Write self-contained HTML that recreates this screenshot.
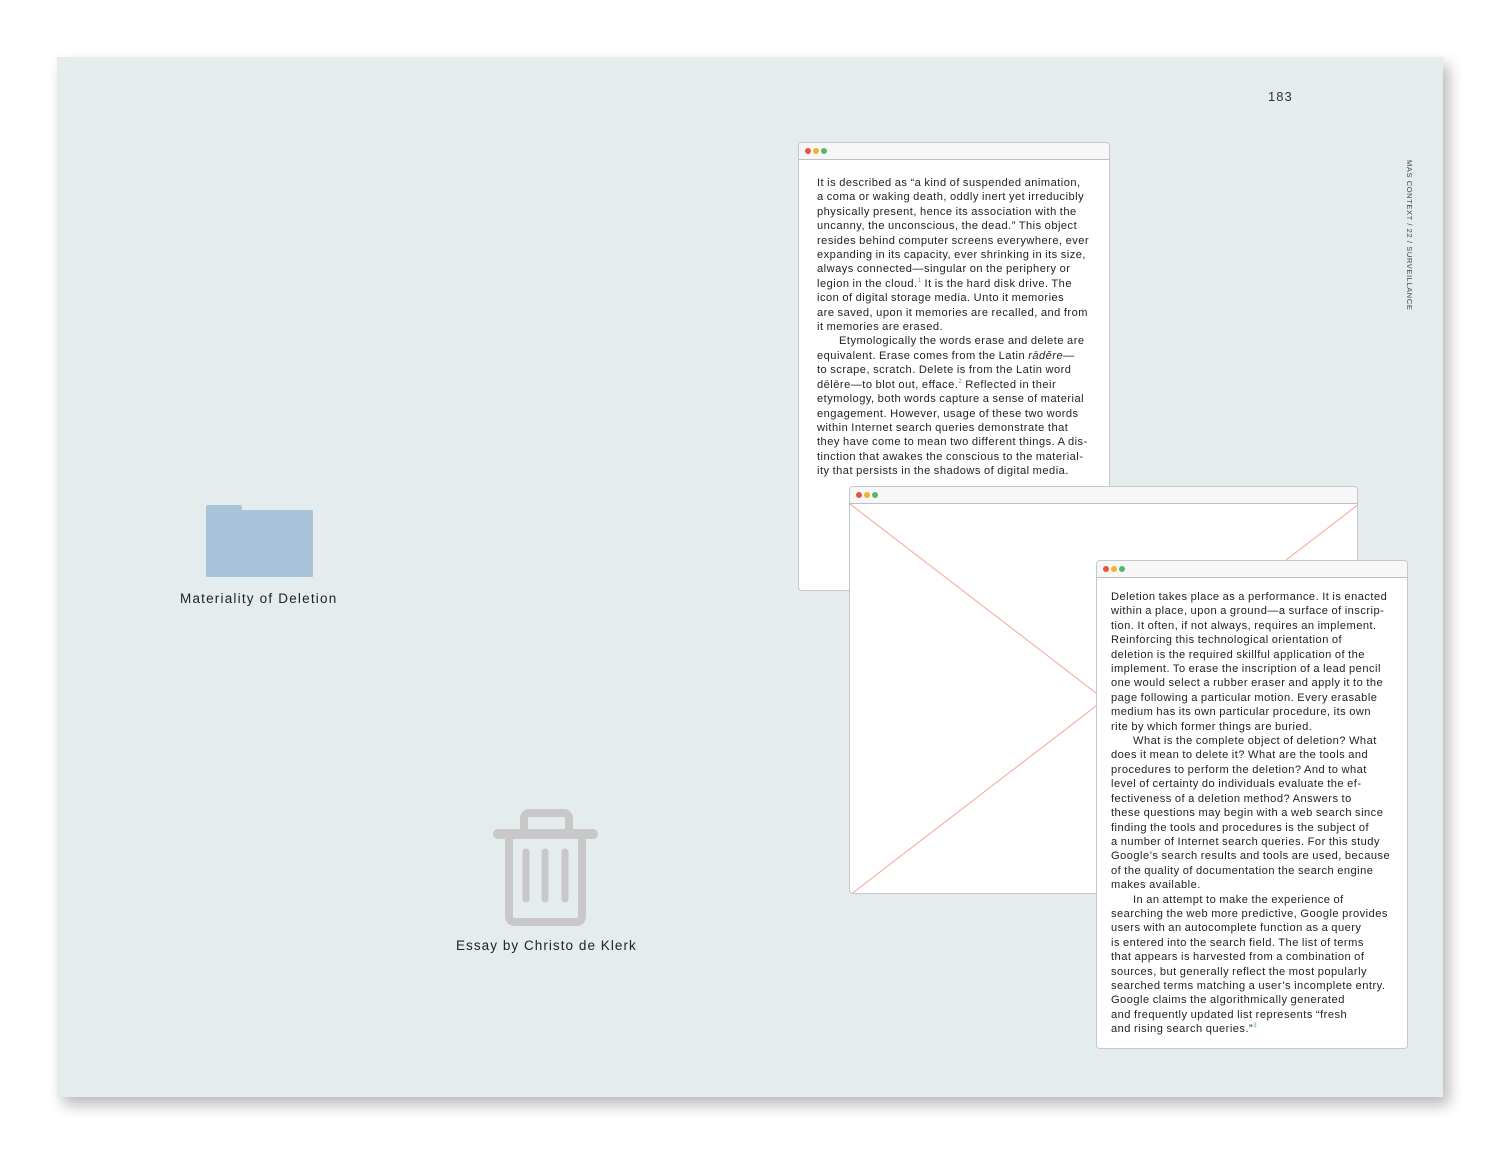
<!DOCTYPE html>
<html><head><meta charset="utf-8">
<style>
*{margin:0;padding:0;box-sizing:border-box}
body{width:1500px;height:1154px;background:#fff;position:relative;overflow:hidden;font-family:"Liberation Sans",sans-serif;color:#222}
.page{position:absolute;left:57px;top:57px;width:1386px;height:1040px;background:#e4ecee;box-shadow:6px 8px 14px rgba(0,0,0,0.28)}
.num{position:absolute;left:1268px;top:89px;font-size:13px;letter-spacing:1px;color:#333}
.side{position:absolute;left:1405px;top:160px;writing-mode:vertical-rl;font-size:7.5px;letter-spacing:0.6px;color:#444}
.win{position:absolute;background:#fff;border:1px solid #c6c9cb;border-radius:4px;overflow:hidden}
.tb{height:17px;background:#f7f7f7;border-bottom:1px solid #bdbfc1;position:relative}
.tb i{position:absolute;top:5px;width:6px;height:6px;border-radius:50%}
.txt{position:absolute;font-size:11.1px;line-height:14.4px;white-space:nowrap;color:#222;letter-spacing:0.48px;word-spacing:-0.5px}
.ind{padding-left:22px}
sup{color:#3aa5d8;font-size:6px;line-height:0;vertical-align:5px}
.lbl{position:absolute;font-size:13.5px;letter-spacing:1.2px;color:#222}
</style></head><body>
<div class="page"></div>
<div class="num">183</div>
<div class="side">MAS CONTEXT / 22 / SURVEILLANCE</div>

<div style="position:absolute;left:206px;top:505px;width:36px;height:8px;background:#a9c4da;border-radius:2px 2px 0 0"></div>
<div style="position:absolute;left:206px;top:510px;width:107px;height:67px;background:#a9c4da;border-radius:1px"></div>
<div class="lbl" style="left:180px;top:591px">Materiality of Deletion</div>

<svg style="position:absolute;left:490px;top:806px" width="112" height="122" viewBox="0 0 112 122">
<g fill="none" stroke="#c8c8c8" stroke-linecap="round" stroke-linejoin="round">
<path d="M34 26 V13 Q34 7 40 7 H73 Q79 7 79 13 V26" stroke-width="8"/>
<path d="M8 28 H103" stroke-width="10"/>
<path d="M19 34 V110 Q19 116 25 116 H86 Q92 116 92 110 V34" stroke-width="8"/>
<path d="M36 46 V93 M55 46 V93 M75 46 V93" stroke-width="7"/>
</g></svg>
<div class="lbl" style="left:456px;top:938px;letter-spacing:1.05px">Essay by Christo de Klerk</div>

<div class="win" style="left:798px;top:142px;width:312px;height:449px">
<div class="tb"><i style="left:6px;background:#e9533a"></i><i style="left:14px;background:#f2b22a"></i><i style="left:22px;background:#58b56d"></i></div>
<div class="txt" style="left:18px;top:33px">It is described as “a kind of suspended animation,<br>a coma or waking death, oddly inert yet irreducibly<br>physically present, hence its association with the<br>uncanny, the unconscious, the dead.” This object<br>resides behind computer screens everywhere, ever<br>expanding in its capacity, ever shrinking in its size,<br>always connected—singular on the periphery or<br>legion in the cloud.<sup>1</sup> It is the hard disk drive. The<br>icon of digital storage media. Unto it memories<br>are saved, upon it memories are recalled, and from<br>it memories are erased.<br><span class="ind">Etymologically the words erase and delete are</span><br>equivalent. Erase comes from the Latin <i>rādĕre</i>—<br>to scrape, scratch. Delete is from the Latin word<br>dēlēre—to blot out, efface.<sup>2</sup> Reflected in their<br>etymology, both words capture a sense of material<br>engagement. However, usage of these two words<br>within Internet search queries demonstrate that<br>they have come to mean two different things. A dis-<br>tinction that awakes the conscious to the material-<br>ity that persists in the shadows of digital media.</div>
</div>

<div class="win" style="left:849px;top:486px;width:509px;height:408px">
<div class="tb"><i style="left:6px;background:#e9533a"></i><i style="left:14px;background:#f2b22a"></i><i style="left:22px;background:#58b56d"></i></div>
<svg style="position:absolute;left:0;top:17px" width="509" height="391"><path d="M0 0 L509 391 M509 0 L0 391" stroke="#f2a595" stroke-width="1" fill="none"/></svg>
</div>

<div class="win" style="left:1096px;top:560px;width:312px;height:489px">
<div class="tb"><i style="left:6px;background:#e9533a"></i><i style="left:14px;background:#f2b22a"></i><i style="left:22px;background:#58b56d"></i></div>
<div class="txt" style="left:14px;top:29px">Deletion takes place as a performance. It is enacted<br>within a place, upon a ground—a surface of inscrip-<br>tion. It often, if not always, requires an implement.<br>Reinforcing this technological orientation of<br>deletion is the required skillful application of the<br>implement. To erase the inscription of a lead pencil<br>one would select a rubber eraser and apply it to the<br>page following a particular motion. Every erasable<br>medium has its own particular procedure, its own<br>rite by which former things are buried.<br><span class="ind">What is the complete object of deletion? What</span><br>does it mean to delete it? What are the tools and<br>procedures to perform the deletion? And to what<br>level of certainty do individuals evaluate the ef-<br>fectiveness of a deletion method? Answers to<br>these questions may begin with a web search since<br>finding the tools and procedures is the subject of<br>a number of Internet search queries. For this study<br>Google’s search results and tools are used, because<br>of the quality of documentation the search engine<br>makes available.<br><span class="ind">In an attempt to make the experience of</span><br>searching the web more predictive, Google provides<br>users with an autocomplete function as a query<br>is entered into the search field. The list of terms<br>that appears is harvested from a combination of<br>sources, but generally reflect the most popularly<br>searched terms matching a user’s incomplete entry.<br>Google claims the algorithmically generated<br>and frequently updated list represents “fresh<br>and rising search queries.”<sup>3</sup></div>
</div>
</body></html>
